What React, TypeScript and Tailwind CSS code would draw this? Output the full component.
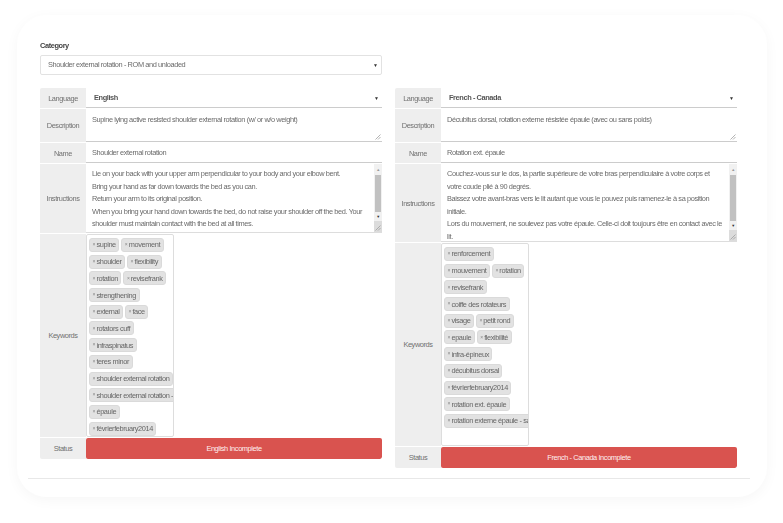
import type { ReactNode } from "react";

interface ColumnData {
  language: string;
  description: string;
  name: string;
  instructions: string[];
  keywords: string[][];
  status: string;
  instructionsHeight: string;
}

const english: ColumnData = {
  language: "English",
  description: "Supine lying active resisted shoulder external rotation (w/ or w/o weight)",
  name: "Shoulder external rotation",
  instructions: [
    "Lie on your back with your upper arm perpendicular to your body and your elbow bent.",
    "Bring your hand as far down towards the bed as you can.",
    "Return your arm to its original position.",
    "When you bring your hand down towards the bed, do not raise your shoulder off the bed. Your shoulder must maintain contact with the bed at all times.",
  ],
  keywords: [
    ["supine", "movement"],
    ["shoulder", "flexibility"],
    ["rotation", "revisefrank"],
    ["strengthening"],
    ["external", "face"],
    ["rotators cuff"],
    ["infraspinatus"],
    ["teres minor"],
    ["shoulder external rotation"],
    ["shoulder external rotation - ROM"],
    ["épaule"],
    ["févrierfebruary2014"],
  ],
  status: "English Incomplete",
  instructionsHeight: "h-[69px]",
};

const french: ColumnData = {
  language: "French - Canada",
  description: "Décubitus dorsal, rotation externe résistée épaule (avec ou sans poids)",
  name: "Rotation ext. épaule",
  instructions: [
    "Couchez-vous sur le dos, la partie supérieure de votre bras perpendiculaire à votre corps et votre coude plié à 90 degrés.",
    "Baissez votre avant-bras vers le lit autant que vous le pouvez puis ramenez-le à sa position initiale.",
    "Lors du mouvement, ne soulevez pas votre épaule. Celle-ci doit toujours être en contact avec le lit.",
  ],
  keywords: [
    ["renforcement"],
    ["mouvement", "rotation"],
    ["revisefrank"],
    ["coiffe des rotateurs"],
    ["visage", "petit rond"],
    ["epaule", "flexibilité"],
    ["infra-épineux"],
    ["décubitus dorsal"],
    ["févrierfebruary2014"],
    ["rotation ext. épaule"],
    ["rotation externe épaule - sans poids"],
  ],
  status: "French - Canada Incomplete",
  instructionsHeight: "h-[78px]",
};

function Row({ label, height, children }: { label: string; height: string; children: ReactNode }) {
  return (
    <div className={`flex ${height}`}>
      <div className="flex w-[46px] shrink-0 items-center justify-center bg-[#eeeeee] pt-[1px] text-[#707070]">{label}</div>
      <div className="min-w-0 flex-1">{children}</div>
    </div>
  );
}

function Caret() {
  return <span className="text-[5px] leading-none tracking-normal text-[#333333]">▼</span>;
}

function Grip() {
  return (
    <svg className="absolute bottom-[1px] right-[1px]" width="6" height="6" viewBox="0 0 6 6" fill="none" stroke="#a0a0a0" strokeWidth="0.8">
      <path d="M0.5 5.5 5.5 0.5M3 5.5 5.5 3" />
    </svg>
  );
}

function Scrollbar() {
  return (
    <div className="flex w-[8px] shrink-0 flex-col items-center bg-[#f1f1f1]">
      <span className="h-[11px] text-[4px] leading-[11px] text-[#999999]">▲</span>
      <div className="w-[6px] flex-1 bg-[#c1c1c1]" />
      <span className="h-[9px] text-[4px] leading-[9px] text-[#333333]">▼</span>
      <div className="relative h-[11px] w-full bg-[#dcdcdc]">
        <Grip />
      </div>
    </div>
  );
}

function Chip({ text }: { text: string }) {
  return (
    <span className="flex h-[14px] shrink-0 items-center whitespace-nowrap rounded-[3px] border border-[#dadada] bg-[#e2e2e2] px-[2.5px] text-[#666666]">
      <span className="mr-[1px] text-[5px] tracking-normal text-[#888888]">×</span>
      {text}
    </span>
  );
}

function Column({ data }: { data: ColumnData }) {
  return (
    <div className="flex w-[342px] flex-col gap-[1px] overflow-hidden rounded-[2px]">
      <Row label="Language" height="h-[20px]">
        <div className="flex h-full items-center justify-between border-b border-[#cccccc] pl-[8px] pr-[3px] pt-[1px] font-bold text-[#555555]">
          {data.language}
          <Caret />
        </div>
      </Row>
      <Row label="Description" height="h-[33px]">
        <div className="relative h-full border-b border-[#cccccc] pl-[6px] pt-[5px] text-[#6a6a6a]">
          {data.description}
          <Grip />
        </div>
      </Row>
      <Row label="Name" height="h-[20px]">
        <div className="flex h-full items-center border-b border-[#cccccc] pl-[6px] pt-[1px] text-[#6a6a6a]">{data.name}</div>
      </Row>
      <Row label="Instructions" height={data.instructionsHeight}>
        <div className="flex h-full border-b border-[#dddddd]">
          <div className="min-w-0 flex-1 overflow-hidden pl-[6px] pr-[4px] pt-[4px] leading-[12.5px] text-[#6a6a6a]">
            {data.instructions.map((line) => (
              <div key={line}>{line}</div>
            ))}
          </div>
          <Scrollbar />
        </div>
      </Row>
      <Row label="Keywords" height="h-[203px]">
        <div className="flex h-full w-[88px] flex-col gap-[2.7px] overflow-hidden rounded-[2px] border border-[#dddddd] pl-[2px] pt-[3px]">
          {data.keywords.map((line) => (
            <div key={line.join()} className="flex gap-[2px]">
              {line.map((word) => (
                <Chip key={word} text={word} />
              ))}
            </div>
          ))}
        </div>
      </Row>
      <Row label="Status" height="h-[21px]">
        <div className="flex h-full items-center justify-center rounded-[2px] bg-[#d9534f] text-[#fff0ef]">{data.status}</div>
      </Row>
    </div>
  );
}

export default function App() {
  return (
    <div className="h-[523px] w-[783px] overflow-hidden bg-white pl-[17px] pt-[15px] font-['Liberation_Sans',Arial,sans-serif] text-[7.4px] tracking-[-0.4px]">
      <div className="h-[482px] w-[750px] rounded-[30px] bg-white pl-[23px] pt-[25px] shadow-[0_3px_14px_rgba(0,0,0,0.04)] blur-[0.3px]">
        <div className="h-[11px] font-bold leading-[11px] text-[#444444]">Category</div>
        <div className="mt-[4px] flex h-[20px] w-[342px] items-center justify-between rounded-[2px] border border-[#e2e2e2] pl-[7px] pr-[3px] text-[#6a6a6a]">
          Shoulder external rotation - ROM and unloaded
          <Caret />
        </div>
        <div className="mt-[13px] flex items-start gap-[13px]">
          <Column data={english} />
          <Column data={french} />
        </div>
        <div className="-ml-[12px] mt-[10px] h-px w-[722px] bg-[#e8e8e8]" />
      </div>
    </div>
  );
}
